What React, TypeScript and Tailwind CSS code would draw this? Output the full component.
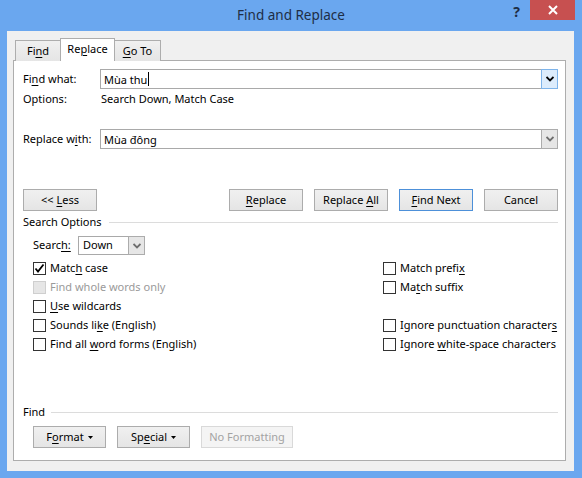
import React from "react";

const font = { fontFamily: '"Noto Sans", "Open Sans", sans-serif' };

function Chevron({ color = "#000" }: { color?: string }) {
  return (
    <svg width="8" height="6" viewBox="0 0 8 6">
      <path d="M0.5 1 L4 4.5 L7.5 1" fill="none" stroke={color} strokeWidth="1.8" />
    </svg>
  );
}

function Combo({ value, focused }: { value: string; focused?: boolean }) {
  return (
    <div className="flex-1 h-[20px] flex border border-[#a9a9a9] bg-white">
      <div className="flex-1 flex items-center pl-[3px] text-[11px] leading-none text-black">
        {value}
        {focused && <span className="inline-block w-px h-[14px] bg-black ml-px" />}
      </div>
      <div
        className={
          "w-[17px] -my-px -mr-px flex items-center justify-center border " +
          (focused ? "bg-[#dcecfc] border-[#7eb4ea]" : "bg-[#e6e6e6] border-[#acacac]")
        }
      >
        <Chevron color={focused ? "#000" : "#6d6d6d"} />
      </div>
    </div>
  );
}

function Btn({
  children,
  w = "w-[74px]",
  primary,
  disabled,
}: {
  children: React.ReactNode;
  w?: string;
  primary?: boolean;
  disabled?: boolean;
}) {
  let cls = "h-[22px] shrink-0 flex items-center justify-center text-[11px] border whitespace-pre ";
  if (disabled) cls += "border-[#d9d9d9] bg-[#f4f4f4] text-[#a3a3a3]";
  else if (primary) cls += "border-[#4d90d9] bg-gradient-to-b from-[#f0f0f0] to-[#e5e5e5] text-black";
  else cls += "border-[#acacac] bg-gradient-to-b from-[#f0f0f0] to-[#e5e5e5] text-black";
  return (
    <div className={cls + " " + w}>
      <span className="flex items-center">{children}</span>
    </div>
  );
}

function Check({ checked, disabled, children }: { checked?: boolean; disabled?: boolean; children: React.ReactNode }) {
  return (
    <div className="h-[19px] flex items-center whitespace-nowrap">
      <div
        className={
          "w-[13px] h-[13px] shrink-0 border flex items-center justify-center " +
          (disabled ? "border-[#cfcfcf] bg-[#e6e6e6]" : "border-[#333333] bg-white")
        }
      >
        {checked && (
          <svg width="11" height="11" viewBox="0 0 11 11">
            <path d="M1.5 5.5 L4 8.5 L9.5 1.5" fill="none" stroke="#000" strokeWidth="1.8" />
          </svg>
        )}
      </div>
      <span className={"ml-[4px] text-[11px] " + (disabled ? "text-[#9a9a9a]" : "text-black")}>{children}</span>
    </div>
  );
}

const U = ({ children }: { children: React.ReactNode }) => <span className="underline underline-offset-2">{children}</span>;

const Tri = () => (
  <svg width="5" height="3" viewBox="0 0 5 3" className="ml-[4px]">
    <path d="M0 0 L5 0 L2.5 3 Z" fill="#000" />
  </svg>
);

export default function App() {
  return (
    <div className="w-[582px] h-[478px] bg-[#6aa7ef] flex flex-col select-none" style={font}>
      {/* Title bar */}
      <div className="h-[31px] grid grid-cols-[1fr_auto_1fr]">
        <div />
        <div className="text-[13.5px] text-[#1e2d45] pt-[5px] leading-[20px]">Find and Replace</div>
        <div className="flex justify-end items-start pr-[7px]">
          <div className="text-[14px] font-bold text-[#1e2d45] mt-[2px] mr-[10px] leading-[20px]">?</div>
          <div className="w-[45px] h-[20px] bg-[#c75050] flex items-center justify-center">
            <svg width="10" height="10" viewBox="0 0 10 10">
              <path d="M1 1 L9 9 M9 1 L1 9" stroke="#fff" strokeWidth="2" />
            </svg>
          </div>
        </div>
      </div>

      {/* Client area */}
      <div className="ml-[7px] mr-[8px] h-[440px] bg-[#f0f0f0] pl-[6px] pr-[8px] pt-[6px] flex flex-col">
        {/* Tabs */}
        <div className="flex items-end h-[23px] pl-[2px] relative z-10 text-[11px] text-black">
          <div className="w-[46px] h-[21px] border border-b-0 border-[#adadad] bg-gradient-to-b from-[#f0f0f0] to-[#e5e5e5] flex items-center justify-center -mb-px">
            <span>
              Fi<U>n</U>d
            </span>
          </div>
          <div className="w-[55px] h-[23px] border border-b-0 border-[#adadad] bg-white flex items-center justify-center -mb-px -ml-px">
            <span className="-mt-[2px]">
              Re<U>p</U>lace
            </span>
          </div>
          <div className="w-[47px] h-[21px] border border-b-0 border-[#adadad] bg-gradient-to-b from-[#f0f0f0] to-[#e5e5e5] flex items-center justify-center -mb-px -ml-px">
            <span>
              <U>G</U>o To
            </span>
          </div>
        </div>

        {/* Panel */}
        <div className="h-[401px] border border-[#adadad] bg-white flex flex-col pl-[9px] pr-[7px] pt-[8px] text-[11px] text-black">
          <div className="flex items-center h-[20px]">
            <div className="w-[77px]">
              Fi<U>n</U>d what:
            </div>
            <Combo value="Mùa thu" focused />
          </div>
          <div className="flex items-center h-[20px]">
            <div className="w-[78px]">Options:</div>
            <div>Search Down, Match Case</div>
          </div>
          <div className="flex items-center h-[20px] mt-[20px]">
            <div className="w-[77px]">
              Replace w<U>i</U>th:
            </div>
            <Combo value="Mùa đông" />
          </div>

          <div className="flex mt-[40px] h-[22px]">
            <Btn>
              {"<< "}
              <U>L</U>ess
            </Btn>
            <div className="flex-1" />
            <div className="flex gap-[11px]">
              <Btn>
                <U>R</U>eplace
              </Btn>
              <Btn>
                {"Replace "}
                <U>A</U>ll
              </Btn>
              <Btn primary>
                <U>F</U>ind Next
              </Btn>
              <Btn>Cancel</Btn>
            </div>
          </div>

          <div className="flex items-center h-[16px] mt-[3px]">
            <span>Search Options</span>
            <div className="flex-1 h-px bg-[#dcdcdc] ml-[7px]" />
          </div>

          <div className="flex items-center h-[19px] mt-[6px] pl-[10px]">
            <span className="w-[45px]">
              Searc<U>h:</U>
            </span>
            <div className="w-[67px] h-[19px] flex border border-[#a9a9a9] bg-white">
              <div className="flex-1 flex items-center pl-[4px]">Down</div>
              <div className="w-[17px] -my-px -mr-px border border-[#acacac] bg-[#e6e6e6] flex items-center justify-center">
                <Chevron color="#6d6d6d" />
              </div>
            </div>
          </div>

          <div className="flex mt-[4px] pl-[10px]">
            <div className="w-[350px] shrink-0 flex flex-col">
              <Check checked>
                Matc<U>h</U> case
              </Check>
              <Check disabled>Find whole words only</Check>
              <Check>
                <U>U</U>se wildcards
              </Check>
              <Check>
                Sounds li<U>k</U>e (English)
              </Check>
              <Check>
                {"Find all "}
                <U>w</U>ord forms (English)
              </Check>
            </div>
            <div className="flex flex-col">
              <Check>
                Match prefi<U>x</U>
              </Check>
              <Check>
                Ma<U>t</U>ch suffix
              </Check>
              <div className="h-[19px]" />
              <Check>
                Ignore punctuation character<U>s</U>
              </Check>
              <Check>
                {"Ignore "}
                <U>w</U>hite-space characters
              </Check>
            </div>
          </div>

          <div className="flex items-center h-[16px] mt-[50px]">
            <span>Find</span>
            <div className="flex-1 h-px bg-[#dcdcdc] ml-[6px]" />
          </div>

          <div className="flex mt-[6px] pl-[10px] gap-[11px]">
            <Btn w="w-[73px]">
              <span>
                F<U>o</U>rmat
              </span>
              <Tri />
            </Btn>
            <Btn w="w-[73px]">
              <span>
                Sp<U>e</U>cial
              </span>
              <Tri />
            </Btn>
            <Btn w="w-[92px]" disabled>
              No Formatting
            </Btn>
          </div>
        </div>
      </div>
    </div>
  );
}
